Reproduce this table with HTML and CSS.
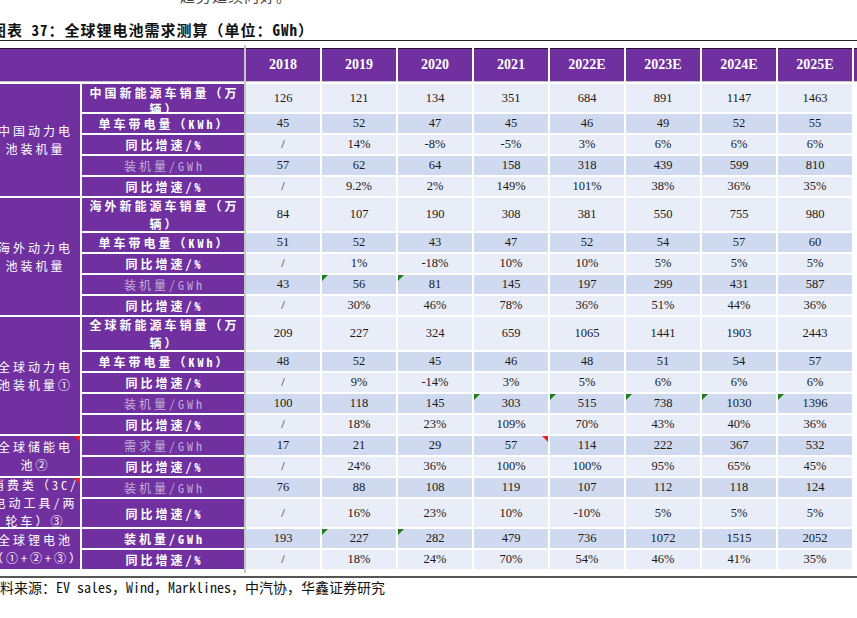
FILE: index.html
```html
<!DOCTYPE html>
<html lang="zh-CN">
<head>
<meta charset="utf-8">
<title>全球锂电池需求测算</title>
<link rel="stylesheet" href="styles.css">
</head>
<body>
<div class="frag"><span>趋势延续向好。</span></div>
<div class="title">图表 37：全球锂电池需求测算（单位：GWh）</div>
<div class="rule-top"></div>
<table class="grid">
  <colgroup>
    <col class="c-cat"><col class="c-lab">
    <col class="c-num"><col class="c-num"><col class="c-num"><col class="c-num">
    <col class="c-num"><col class="c-num"><col class="c-num"><col class="c-num">
    <col class="c-num">
  </colgroup>
  <thead>
    <tr class="r-head">
      <th class="head" colspan="2"></th>
      <th class="head">2018</th><th class="head">2019</th><th class="head">2020</th><th class="head">2021</th>
      <th class="head">2022E</th><th class="head">2023E</th><th class="head">2024E</th><th class="head">2025E</th>
      <th class="head"></th>
    </tr>
  </thead>
  <tbody>
    <!-- 中国 -->
    <tr class="r-28 lt">
      <td class="cat" rowspan="5"><div class="cat-in">中国动力电<br>池装机量</div></td>
      <td class="lab"><div class="clip">中国新能源车销量（万辆）</div></td>
      <td>126</td><td>121</td><td>134</td><td>351</td><td>684</td><td>891</td><td>1147</td><td>1463</td><td class="void"></td>
    </tr>
    <tr class="r-19 dk">
      <td class="lab">单车带电量（KWh）</td>
      <td>45</td><td>52</td><td>47</td><td>45</td><td>46</td><td>49</td><td>52</td><td>55</td><td class="void"></td>
    </tr>
    <tr class="r-19 lt">
      <td class="lab">同比增速/%</td>
      <td>/</td><td>14%</td><td>-8%</td><td>-5%</td><td>3%</td><td>6%</td><td>6%</td><td>6%</td><td class="void"></td>
    </tr>
    <tr class="r-19 dk">
      <td class="lab dim">装机量/GWh</td>
      <td>57</td><td>62</td><td>64</td><td>158</td><td>318</td><td>439</td><td>599</td><td>810</td><td class="void"></td>
    </tr>
    <tr class="r-19 lt">
      <td class="lab">同比增速/%</td>
      <td>/</td><td>9.2%</td><td>2%</td><td>149%</td><td>101%</td><td>38%</td><td>36%</td><td>35%</td><td class="void"></td>
    </tr>
    <!-- 海外 -->
    <tr class="r-33 lt">
      <td class="cat" rowspan="5"><div class="cat-in">海外动力电<br>池装机量</div></td>
      <td class="lab"><div class="two">海外新能源车销量（万辆）</div></td>
      <td>84</td><td>107</td><td>190</td><td>308</td><td>381</td><td>550</td><td>755</td><td>980</td><td class="void"></td>
    </tr>
    <tr class="r-19 dk">
      <td class="lab">单车带电量（KWh）</td>
      <td>51</td><td>52</td><td>43</td><td>47</td><td>52</td><td>54</td><td>57</td><td>60</td><td class="void"></td>
    </tr>
    <tr class="r-19 lt">
      <td class="lab">同比增速/%</td>
      <td>/</td><td>1%</td><td>-18%</td><td>10%</td><td>10%</td><td>5%</td><td>5%</td><td>5%</td><td class="void"></td>
    </tr>
    <tr class="r-19 dk">
      <td class="lab dim">装机量/GWh</td>
      <td>43</td><td class="g">56</td><td class="g">81</td><td>145</td><td>197</td><td>299</td><td>431</td><td>587</td><td class="void"></td>
    </tr>
    <tr class="r-19 lt">
      <td class="lab">同比增速/%</td>
      <td>/</td><td>30%</td><td>46%</td><td>78%</td><td>36%</td><td>51%</td><td>44%</td><td>36%</td><td class="void"></td>
    </tr>
    <!-- 全球 -->
    <tr class="r-33 lt">
      <td class="cat" rowspan="5"><div class="cat-in">全球动力电<br>池装机量①</div></td>
      <td class="lab"><div class="two">全球新能源车销量（万辆）</div></td>
      <td>209</td><td>227</td><td>324</td><td>659</td><td>1065</td><td>1441</td><td>1903</td><td>2443</td><td class="void"></td>
    </tr>
    <tr class="r-19 dk">
      <td class="lab">单车带电量（KWh）</td>
      <td>48</td><td>52</td><td>45</td><td>46</td><td>48</td><td>51</td><td>54</td><td>57</td><td class="void"></td>
    </tr>
    <tr class="r-19 lt">
      <td class="lab">同比增速/%</td>
      <td>/</td><td>9%</td><td>-14%</td><td>3%</td><td>5%</td><td>6%</td><td>6%</td><td>6%</td><td class="void"></td>
    </tr>
    <tr class="r-19 dk">
      <td class="lab dim">装机量/GWh</td>
      <td>100</td><td>118</td><td>145</td><td class="g">303</td><td class="g">515</td><td class="g">738</td><td class="g">1030</td><td class="g">1396</td><td class="void"></td>
    </tr>
    <tr class="r-19 lt">
      <td class="lab">同比增速/%</td>
      <td>/</td><td>18%</td><td>23%</td><td>109%</td><td>70%</td><td>43%</td><td>40%</td><td>36%</td><td class="void"></td>
    </tr>
    <!-- 储能 -->
    <tr class="r-19 dk">
      <td class="cat r" rowspan="2"><div class="cat-in">全球储能电<br>池②</div></td>
      <td class="lab dim">需求量/GWh</td>
      <td>17</td><td>21</td><td>29</td><td class="r">57</td><td>114</td><td>222</td><td>367</td><td>532</td><td class="void"></td>
    </tr>
    <tr class="r-19 lt">
      <td class="lab">同比增速/%</td>
      <td>/</td><td>24%</td><td>36%</td><td>100%</td><td>100%</td><td>95%</td><td>65%</td><td>45%</td><td class="void"></td>
    </tr>
    <!-- 消费类 -->
    <tr class="r-19 dk">
      <td class="cat r" rowspan="2"><div class="cat-in tight">消费类（3C/<br>电动工具/两<br>轮车）③</div></td>
      <td class="lab dim">装机量/GWh</td>
      <td>76</td><td>88</td><td>108</td><td>119</td><td>107</td><td>112</td><td>118</td><td>124</td><td class="void"></td>
    </tr>
    <tr class="r-28 lt">
      <td class="lab">同比增速/%</td>
      <td>/</td><td>16%</td><td>23%</td><td>10%</td><td>-10%</td><td>5%</td><td>5%</td><td>5%</td><td class="void"></td>
    </tr>
    <!-- 全球锂电池 -->
    <tr class="r-19 dk">
      <td class="cat" rowspan="2"><div class="cat-in">全球锂电池<br>（①+②+③）</div></td>
      <td class="lab">装机量/GWh</td>
      <td>193</td><td class="g">227</td><td class="g">282</td><td>479</td><td>736</td><td>1072</td><td>1515</td><td>2052</td><td class="void"></td>
    </tr>
    <tr class="r-19 lt">
      <td class="lab">同比增速/%</td>
      <td>/</td><td>18%</td><td>24%</td><td>70%</td><td>54%</td><td>46%</td><td>41%</td><td>35%</td><td class="void"></td>
    </tr>
  </tbody>
</table>
<div class="rule-bottom"></div>
<div class="source">资料来源：EV sales，Wind，Marklines，中汽协，华鑫证券研究</div>
<div class="freeze"></div>
</body>
</html>
```

FILE: styles.css
```css
* { box-sizing: border-box; }

html, body {
  margin: 0;
  padding: 0;
  background: #ffffff;
  overflow: hidden;
}

body {
  width: 857px;
  height: 618px;
  position: relative;
  font-family: "Noto Sans CJK SC", "Noto Sans", sans-serif;
  color: #111;
}

.frag {
  height: 6px;
  overflow: hidden;
  padding-left: 180px;
}

.frag span {
  display: block;
  margin-top: -12px;
  font-size: 15px;
  line-height: 16px;
  color: #444;
  letter-spacing: 1px;
}

.title {
  margin: 14px 0 0 -9px;
  height: 20px;
  line-height: 20px;
  font-size: 15px;
  font-weight: bold;
  letter-spacing: 1px;
  white-space: nowrap;
  color: #111;
  font-family: "Noto Sans Mono CJK SC", "Noto Sans CJK SC", monospace;
}

.rule-top {
  border-top: 1px solid #222;
}

table.grid {
  margin: 5px 0 0 -14px;
  border-collapse: separate;
  border-spacing: 2px;
  table-layout: fixed;
  width: 944px;
}

col.c-cat { width: 92px; }
col.c-lab { width: 162px; }
col.c-num { width: 74px; }

table.grid th,
table.grid td {
  padding: 0;
  text-align: center;
  vertical-align: middle;
  overflow: hidden;
}

tr.r-head > th { height: 34px; }
tr.r-19 > td { height: 19px; }
tr.r-28 > td { height: 28px; }
tr.r-33 > td { height: 33px; }

th.head {
  background: #7030a0;
  color: #ffffff;
  border-top: 1px solid #26132f;
  border-bottom: 1px solid #c4c4c4;
  font-family: "Liberation Serif", serif;
  font-weight: bold;
  font-size: 14px;
  line-height: 18px;
}

table.grid td {
  font-family: "Liberation Serif", serif;
  font-size: 12.5px;
  line-height: 17px;
  color: #1a1a1a;
}

tr.lt > td { background: #e9edf8; }
tr.dk > td { background: #cfdaf1; }

table.grid td.void { background: transparent; }

table.grid td.cat,
table.grid td.lab {
  background: #7030a0;
  color: #ffffff;
  font-family: "Noto Sans Mono CJK SC", "Noto Sans CJK SC", sans-serif;
  font-size: 12px;
  letter-spacing: 3px;
  padding-left: 3px;
}

table.grid td.cat {
  overflow: visible;
  position: relative;
  font-weight: 500;
}

.cat-in {
  line-height: 18px;
  white-space: nowrap;
}

.cat-in.tight {
  margin: -3px 0;
}

table.grid td.lab {
  font-weight: bold;
  line-height: 17px;
}

table.grid td.lab.dim {
  font-weight: normal;
  color: #bfaed6;
}

.clip {
  height: 28px;
  line-height: 16px;
  overflow: hidden;
  padding-top: 1px;
}

.two {
  line-height: 18px;
  margin: -3px 0;
}

/* Excel indicators */
table.grid td.g,
table.grid td.r {
  position: relative;
}

td.g::before {
  content: "";
  position: absolute;
  left: 0;
  top: 0;
  border-top: 6px solid #1d7d1d;
  border-right: 6px solid transparent;
}

td.r::after {
  content: "";
  position: absolute;
  right: 0;
  top: 0;
  border-top: 6px solid #ff1a1a;
  border-left: 6px solid transparent;
}

.rule-bottom {
  margin-top: 5px;
  border-top: 2px solid #555;
}

.source {
  margin-left: -14px;
  height: 18px;
  line-height: 18px;
  font-size: 14px;
  white-space: nowrap;
  color: #111;
  font-family: "Noto Sans Mono CJK SC", "Noto Sans CJK SC", monospace;
}

.freeze {
  position: absolute;
  left: 244px;
  top: 45px;
  width: 2px;
  height: 528px;
  background: #c6c6c6;
}
```
